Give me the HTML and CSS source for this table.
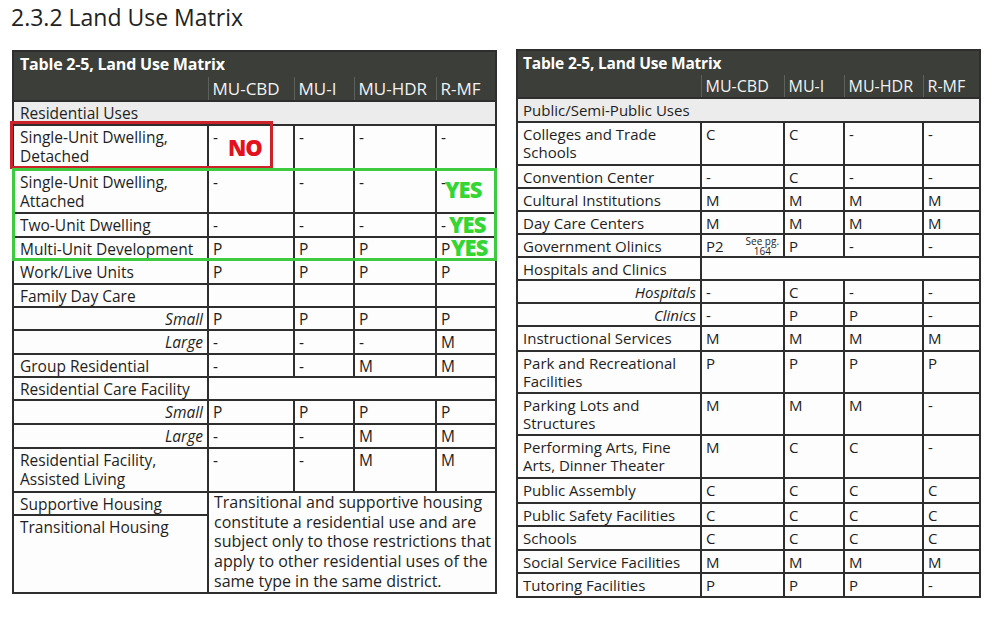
FILE: index.html
```html
<!DOCTYPE html>
<html lang="en">
<head>
<meta charset="utf-8">
<title>2.3.2 Land Use Matrix</title>
<link rel="stylesheet" href="styles.css">
</head>
<body>
<h1 class="title">2.3.2 Land Use Matrix</h1>
<div class="tables">
  <div class="matrix left">
    <table>
      <colgroup><col class="c0"><col class="c1"><col class="c2"><col class="c3"><col class="c4"></colgroup>
      <tr class="hd t"><td colspan="5">Table 2-5, Land Use Matrix</td></tr>
      <tr class="hd ch"><td></td><td>MU-CBD</td><td>MU-I</td><td>MU-HDR</td><td>R-MF</td></tr>
      <tr class="sec"><td colspan="5">Residential Uses</td></tr>
      <tr class="h45"><td>Single-Unit Dwelling, Detached</td><td>-</td><td>-</td><td>-</td><td>-</td></tr>
      <tr class="h43"><td>Single-Unit Dwelling, Attached</td><td>-</td><td>-</td><td>-</td><td>-</td></tr>
      <tr class="h24"><td>Two-Unit Dwelling</td><td>-</td><td>-</td><td>-</td><td>-</td></tr>
      <tr class="h23"><td>Multi-Unit Development</td><td>P</td><td>P</td><td>P</td><td>P</td></tr>
      <tr class="h24"><td>Work/Live Units</td><td>P</td><td>P</td><td>P</td><td>P</td></tr>
      <tr class="h23"><td>Family Day Care</td><td></td><td></td><td></td><td></td></tr>
      <tr class="h23"><td class="sub">Small</td><td>P</td><td>P</td><td>P</td><td>P</td></tr>
      <tr class="h24"><td class="sub">Large</td><td>-</td><td>-</td><td>-</td><td>M</td></tr>
      <tr class="h23"><td>Group Residential</td><td>-</td><td>-</td><td>M</td><td>M</td></tr>
      <tr class="h23"><td>Residential Care Facility</td><td colspan="4"></td></tr>
      <tr class="h24"><td class="sub">Small</td><td>P</td><td>P</td><td>P</td><td>P</td></tr>
      <tr class="h24"><td class="sub">Large</td><td>-</td><td>-</td><td>M</td><td>M</td></tr>
      <tr class="h44"><td>Residential Facility, Assisted Living</td><td>-</td><td>-</td><td>M</td><td>M</td></tr>
      <tr class="h23"><td>Supportive Housing</td><td colspan="4" rowspan="2" class="note">Transitional and supportive housing constitute a residential use and are subject only to those restrictions that apply to other residential uses of the same type in the same district.</td></tr>
      <tr class="h78"><td>Transitional Housing</td></tr>
    </table>
    <div class="box box-red"></div>
    <div class="box box-green"></div>
    <span class="stamp no">NO</span>
    <span class="stamp yes y1">YES</span>
    <span class="stamp yes y2">YES</span>
    <span class="stamp yes y3">YES</span>
  </div>
  <div class="matrix right">
    <table>
      <colgroup><col class="c0"><col class="c1"><col class="c2"><col class="c3"><col class="c4"></colgroup>
      <tr class="hd t"><td colspan="5">Table 2-5, Land Use Matrix</td></tr>
      <tr class="hd ch"><td></td><td>MU-CBD</td><td>MU-I</td><td>MU-HDR</td><td>R-MF</td></tr>
      <tr class="sec"><td colspan="5">Public/Semi-Public Uses</td></tr>
      <tr class="h43"><td>Colleges and Trade Schools</td><td>C</td><td>C</td><td>-</td><td>-</td></tr>
      <tr class="h23"><td>Convention Center</td><td>-</td><td>C</td><td>-</td><td>-</td></tr>
      <tr class="h23"><td>Cultural Institutions</td><td>M</td><td>M</td><td>M</td><td>M</td></tr>
      <tr class="h23"><td>Day Care Centers</td><td>M</td><td>M</td><td>M</td><td>M</td></tr>
      <tr class="h23"><td>Government Olinics</td><td><div class="split"><span>P2</span><span class="see">See pg.<br>164</span></div></td><td>P</td><td>-</td><td>-</td></tr>
      <tr class="h23"><td>Hospitals and Clinics</td><td colspan="4"></td></tr>
      <tr class="h23"><td class="sub">Hospitals</td><td>-</td><td>C</td><td>-</td><td>-</td></tr>
      <tr class="h23"><td class="sub">Clinics</td><td>-</td><td>P</td><td>P</td><td>-</td></tr>
      <tr class="h25"><td>Instructional Services</td><td>M</td><td>M</td><td>M</td><td>M</td></tr>
      <tr class="h42"><td>Park and Recreational Facilities</td><td>P</td><td>P</td><td>P</td><td>P</td></tr>
      <tr class="h42"><td>Parking Lots and Structures</td><td>M</td><td>M</td><td>M</td><td>-</td></tr>
      <tr class="h43"><td>Performing Arts, Fine Arts, Dinner Theater</td><td>M</td><td>C</td><td>C</td><td>-</td></tr>
      <tr class="h25"><td>Public Assembly</td><td>C</td><td>C</td><td>C</td><td>C</td></tr>
      <tr class="h23"><td>Public Safety Facilities</td><td>C</td><td>C</td><td>C</td><td>C</td></tr>
      <tr class="h24"><td>Schools</td><td>C</td><td>C</td><td>C</td><td>C</td></tr>
      <tr class="h23"><td>Social Service Facilities</td><td>M</td><td>M</td><td>M</td><td>M</td></tr>
      <tr class="h24"><td>Tutoring Facilities</td><td>P</td><td>P</td><td>P</td><td>-</td></tr>
    </table>
  </div>
</div>
</body>
</html>
```

FILE: styles.css
```css
html, body {
  margin: 0;
  padding: 0;
  background: #ffffff;
}
body {
  font-family: "Open Sans", "Noto Sans", sans-serif;
  color: #1f1f1f;
  width: 1000px;
  height: 633px;
  overflow: hidden;
}
.title {
  margin: 0;
  padding: 1px 0 0 11px;
  font-size: 23px;
  line-height: 32px;
  font-weight: 400;
  color: #222;
}
.tables {
  display: flex;
  align-items: flex-start;
  gap: 19px;
  padding-left: 12px;
  margin-top: 16px;
}
.matrix {
  position: relative;
}
.matrix.left { margin-top: 1px; }
.matrix table {
  border-collapse: collapse;
  table-layout: fixed;
  border: 2px solid #2e2e2e;
  background: #fdfdfd;
}
.matrix td {
  border: 2px solid #2e2e2e;
  padding: 2px 4px 0 4px;
  vertical-align: top;
  line-height: 19px;
  font-size: 15.5px;
  overflow: hidden;
}
.matrix td:first-child { padding-left: 6px; }

.left table { width: 483px; }
.left .c0 { width: 195px; }
.left .c1 { width: 86px; }
.left .c2 { width: 60px; }
.left .c3 { width: 82px; }
.left .c4 { width: 60px; }

.right table { width: 463px; }
.right .c0 { width: 184px; }
.right .c1 { width: 83px; }
.right .c2 { width: 60px; }
.right .c3 { width: 79px; }
.right .c4 { width: 57px; }
.right td { font-size: 15px; line-height: 18px; }
.right td:first-child { padding-left: 5px; }

.matrix .hd td {
  border: none;
  background: #3b3e39;
  color: #ffffff;
  vertical-align: middle;
  padding-top: 0;
}
.matrix .hd.t td {
  font-weight: 700;
  font-size: 16px;
  padding-left: 6px;
  letter-spacing: -0.2px;
}
.matrix .hd.ch td {
  font-size: 17px;
  color: #f2f2f2;
}
.matrix .hd.ch td + td { border-left: 1px solid #5e615b; }
.left .hd.t { height: 26px; }
.left .hd.ch { height: 24px; }
.right .hd.t { height: 25px; }
.right .hd.ch { height: 23px; }
.right .hd.ch td { font-size: 16px; }
.right .hd.t td { font-size: 15.5px; padding-left: 5px; }

.matrix .sec td {
  background: #ececec;
  vertical-align: middle;
  padding-top: 0;
}
.sec { height: 24px; }
.h23 { height: 23px; }
.h24 { height: 24px; }
.h25 { height: 25px; }
.h42 { height: 42px; }
.h43 { height: 43px; }
.h44 { height: 44px; }
.h45 { height: 45px; }
.h78 { height: 78px; }

.matrix td.sub {
  text-align: right;
  font-style: italic;
  padding-right: 4px;
}
.matrix td.note {
  font-size: 16px;
  line-height: 19.7px;
  padding: 0 4px 0 5px;
}
.split {
  display: flex;
  justify-content: space-between;
  align-items: flex-start;
}
.see {
  font-size: 10px;
  line-height: 10px;
  text-align: center;
  margin-top: -1px;
}

.box {
  position: absolute;
  box-sizing: border-box;
  pointer-events: none;
}
.box-red {
  left: -2px;
  top: 71px;
  width: 263px;
  height: 48px;
  border: 3px solid #cc2229;
}
.box-green {
  left: 0;
  top: 118px;
  width: 485px;
  height: 93px;
  border: 3px solid #3fcb3f;
}
.stamp {
  position: absolute;
  font-family: "Open Sans", sans-serif;
  font-weight: 800;
  font-size: 22px;
  line-height: 22px;
  letter-spacing: -1px;
}
.no { left: 216px; top: 86px; color: #e3111c; }
.yes { color: #34d634; }
.y1 { left: 433px; top: 128px; }
.y2 { left: 437px; top: 163px; }
.y3 { left: 439px; top: 186px; }
```
